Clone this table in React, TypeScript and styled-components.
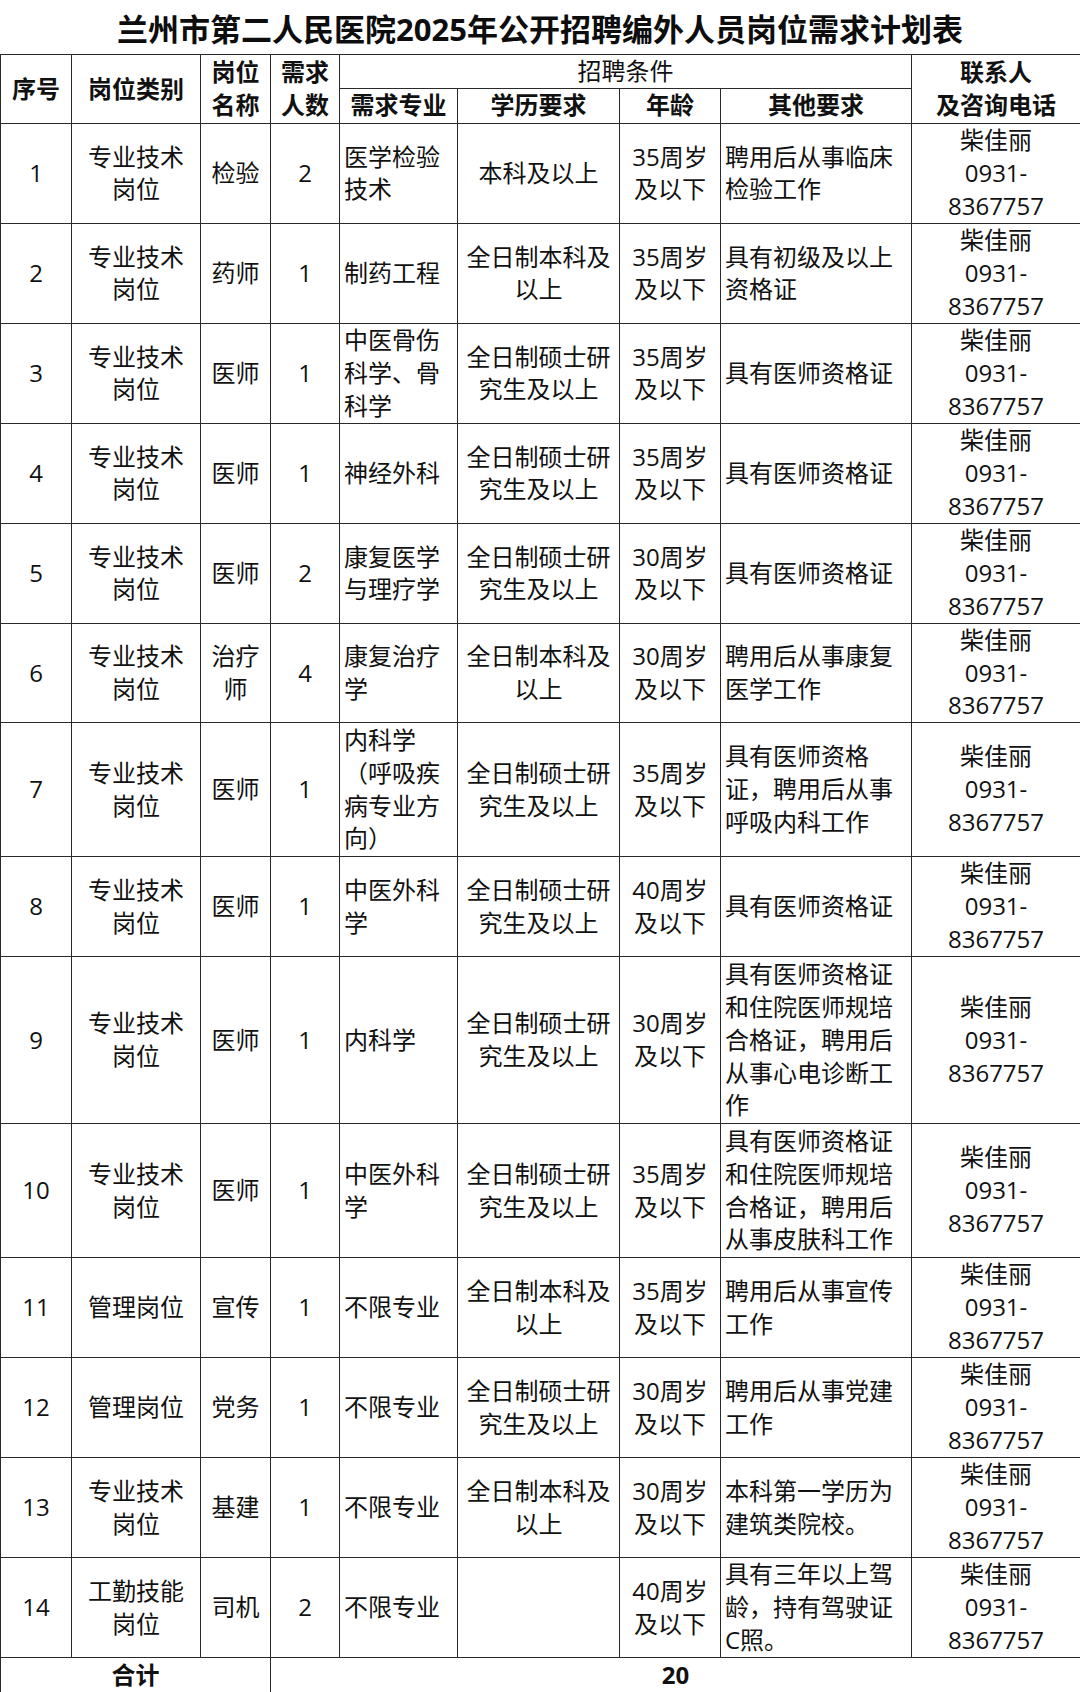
import React from 'react';
import styled, { createGlobalStyle } from 'styled-components';

const GlobalStyle = createGlobalStyle`
  html, body {
    margin: 0;
    padding: 0;
    background: #fff;
  }
  body {
    font-family: "Open Sans", "Noto Sans CJK SC", sans-serif;
    color: #111;
  }
`;

const Page = styled.div`
  width: 1080px;
  display: flex;
  flex-direction: column;
`;

const Title = styled.h1`
  margin: 0;
  height: 54px;
  display: flex;
  align-items: center;
  justify-content: center;
  font-size: 31px;
  font-weight: 700;
  color: #0d0d0d;
`;

const Table = styled.table`
  width: 1080px;
  table-layout: fixed;
  border-collapse: collapse;
  font-size: 24px;
`;

const Row = styled.tr<{ $h: number }>`
  height: ${(p) => p.$h}px;
`;

const Cell = styled.td<{ $left?: boolean; $bold?: boolean }>`
  border: 1.5px solid #2a2a2a;
  padding: 0 0 0 ${(p) => (p.$left ? '4px' : '0')};
  text-align: ${(p) => (p.$left ? 'left' : 'center')};
  vertical-align: middle;
  line-height: 32.8px;
  font-weight: ${(p) => (p.$bold ? 700 : 400)};
  white-space: nowrap;
  overflow: hidden;
`;

const Lines: React.FC<{ text: string }> = ({ text }) => (
  <>
    {text.split('/').map((line, i) => (
      <React.Fragment key={i}>
        {i > 0 && <br />}
        {line}
      </React.Fragment>
    ))}
  </>
);

type Job = {
  no: string;
  kind: string;
  post: string;
  count: string;
  major: string;
  edu: string;
  age: string;
  other: string;
  h: number;
};

const jobs: Job[] = [
  { no: '1', kind: '专业技术/岗位', post: '检验', count: '2', major: '医学检验/技术', edu: '本科及以上', age: '35周岁/及以下', other: '聘用后从事临床/检验工作', h: 100 },
  { no: '2', kind: '专业技术/岗位', post: '药师', count: '1', major: '制药工程', edu: '全日制本科及/以上', age: '35周岁/及以下', other: '具有初级及以上/资格证', h: 100 },
  { no: '3', kind: '专业技术/岗位', post: '医师', count: '1', major: '中医骨伤/科学、骨/科学', edu: '全日制硕士研/究生及以上', age: '35周岁/及以下', other: '具有医师资格证', h: 100 },
  { no: '4', kind: '专业技术/岗位', post: '医师', count: '1', major: '神经外科', edu: '全日制硕士研/究生及以上', age: '35周岁/及以下', other: '具有医师资格证', h: 100 },
  { no: '5', kind: '专业技术/岗位', post: '医师', count: '2', major: '康复医学/与理疗学', edu: '全日制硕士研/究生及以上', age: '30周岁/及以下', other: '具有医师资格证', h: 100 },
  { no: '6', kind: '专业技术/岗位', post: '治疗/师', count: '4', major: '康复治疗/学', edu: '全日制本科及/以上', age: '30周岁/及以下', other: '聘用后从事康复/医学工作', h: 99 },
  { no: '7', kind: '专业技术/岗位', post: '医师', count: '1', major: '内科学/（呼吸疾/病专业方/向）', edu: '全日制硕士研/究生及以上', age: '35周岁/及以下', other: '具有医师资格/证，聘用后从事/呼吸内科工作', h: 134 },
  { no: '8', kind: '专业技术/岗位', post: '医师', count: '1', major: '中医外科/学', edu: '全日制硕士研/究生及以上', age: '40周岁/及以下', other: '具有医师资格证', h: 100 },
  { no: '9', kind: '专业技术/岗位', post: '医师', count: '1', major: '内科学', edu: '全日制硕士研/究生及以上', age: '30周岁/及以下', other: '具有医师资格证/和住院医师规培/合格证，聘用后/从事心电诊断工/作', h: 167 },
  { no: '10', kind: '专业技术/岗位', post: '医师', count: '1', major: '中医外科/学', edu: '全日制硕士研/究生及以上', age: '35周岁/及以下', other: '具有医师资格证/和住院医师规培/合格证，聘用后/从事皮肤科工作', h: 134 },
  { no: '11', kind: '管理岗位', post: '宣传', count: '1', major: '不限专业', edu: '全日制本科及/以上', age: '35周岁/及以下', other: '聘用后从事宣传/工作', h: 100 },
  { no: '12', kind: '管理岗位', post: '党务', count: '1', major: '不限专业', edu: '全日制硕士研/究生及以上', age: '30周岁/及以下', other: '聘用后从事党建/工作', h: 100 },
  { no: '13', kind: '专业技术/岗位', post: '基建', count: '1', major: '不限专业', edu: '全日制本科及/以上', age: '30周岁/及以下', other: '本科第一学历为/建筑类院校。', h: 100 },
  { no: '14', kind: '工勤技能/岗位', post: '司机', count: '2', major: '不限专业', edu: '', age: '40周岁/及以下', other: '具有三年以上驾/龄，持有驾驶证/C照。', h: 100 },
];

const colWidths = [71, 129, 70, 69, 118, 162, 101, 191, 169];
const contact = '柴佳丽/0931-/8367757';

const App: React.FC = () => {
  return (
    <Page>
      <GlobalStyle />
      <Title>兰州市第二人民医院2025年公开招聘编外人员岗位需求计划表</Title>
      <Table>
        <colgroup>
          {colWidths.map((w, i) => (
            <col key={i} width={w} />
          ))}
        </colgroup>
        <thead>
          <Row $h={33}>
            <Cell as="th" rowSpan={2} $bold>序号</Cell>
            <Cell as="th" rowSpan={2} $bold>岗位类别</Cell>
            <Cell as="th" rowSpan={2} $bold><Lines text="岗位/名称" /></Cell>
            <Cell as="th" rowSpan={2} $bold><Lines text="需求/人数" /></Cell>
            <Cell as="th" colSpan={4}>招聘条件</Cell>
            <Cell as="th" rowSpan={2} $bold><Lines text="联系人/及咨询电话" /></Cell>
          </Row>
          <Row $h={35}>
            <Cell as="th" $bold>需求专业</Cell>
            <Cell as="th" $bold>学历要求</Cell>
            <Cell as="th" $bold>年龄</Cell>
            <Cell as="th" $bold>其他要求</Cell>
          </Row>
        </thead>
        <tbody>
          {jobs.map((j) => (
            <Row key={j.no} $h={j.h}>
              <Cell>{j.no}</Cell>
              <Cell><Lines text={j.kind} /></Cell>
              <Cell><Lines text={j.post} /></Cell>
              <Cell>{j.count}</Cell>
              <Cell $left><Lines text={j.major} /></Cell>
              <Cell><Lines text={j.edu} /></Cell>
              <Cell><Lines text={j.age} /></Cell>
              <Cell $left><Lines text={j.other} /></Cell>
              <Cell><Lines text={contact} /></Cell>
            </Row>
          ))}
          <Row $h={35}>
            <Cell colSpan={3} $bold>合计</Cell>
            <Cell colSpan={6} $bold>20</Cell>
          </Row>
        </tbody>
      </Table>
    </Page>
  );
};

export default App;
